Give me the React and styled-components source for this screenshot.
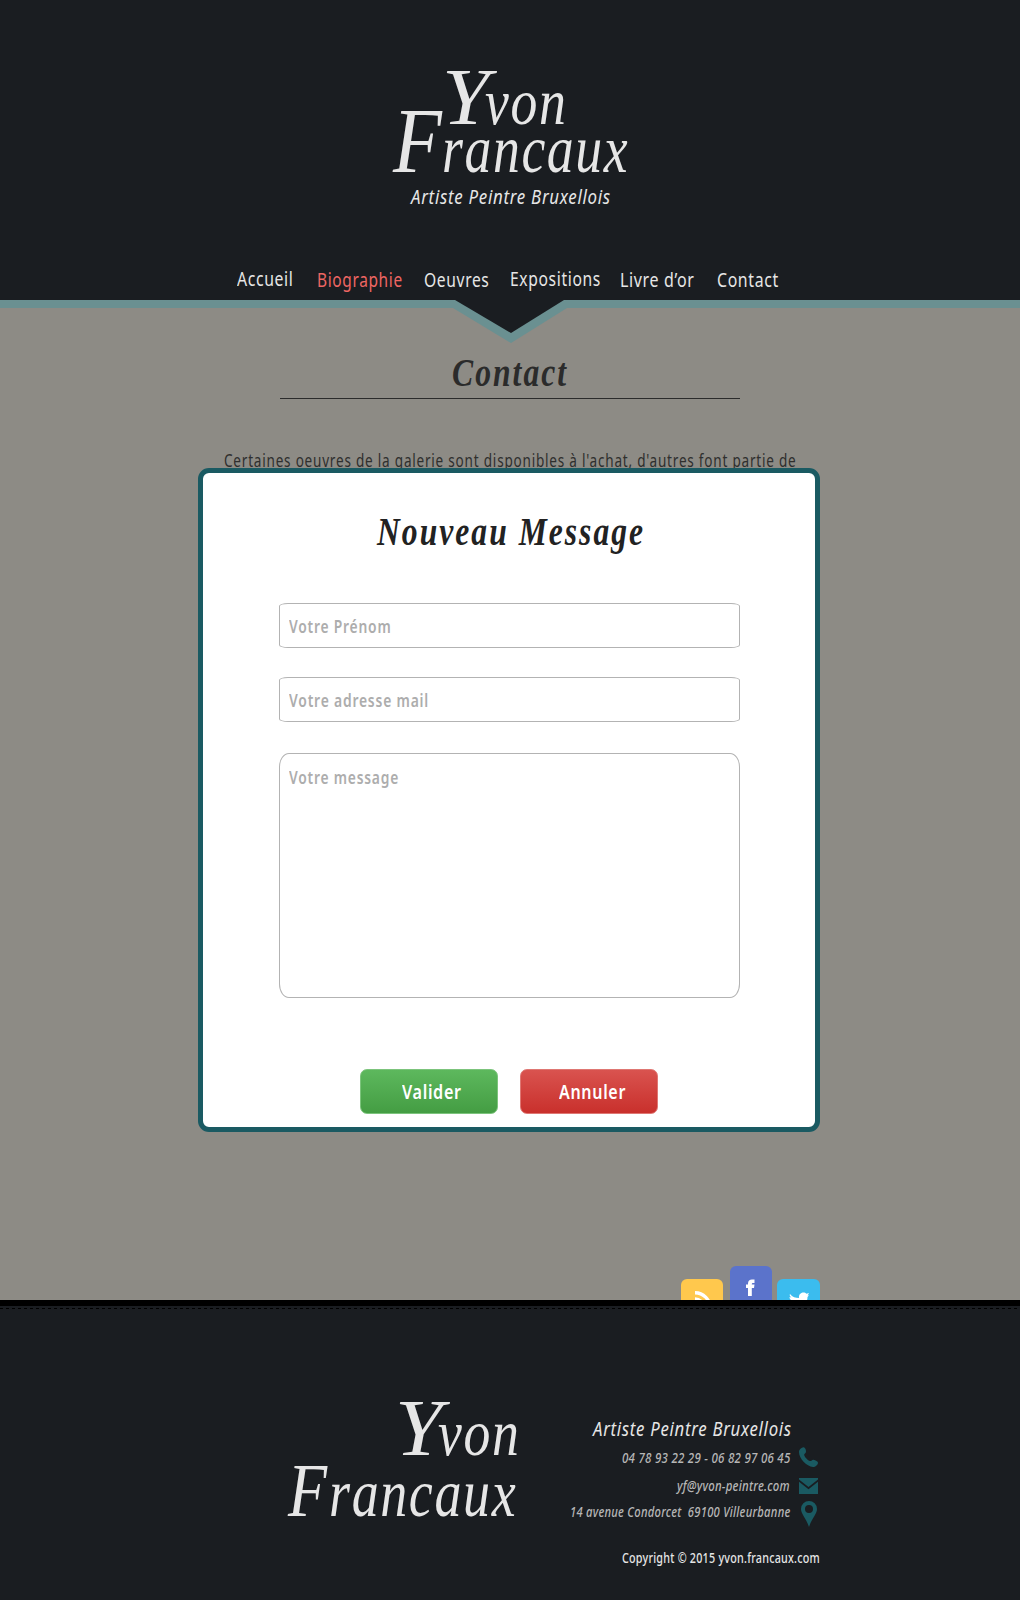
import React, { useLayoutEffect, useRef, useState } from "react";
import styled, { createGlobalStyle, css } from "styled-components";

const ink = "#1a1d21";
const teal = "#1a5a62";
const stone = "#8d8b85";

const Global = createGlobalStyle`
  * { box-sizing: border-box; }
  body { margin: 0; background: ${stone}; }
`;

const sans = css`font-family: "Noto Sans", "Open Sans", sans-serif;`;
const script = css`
  font-family: "Monotype Corsiva", "Liberation Serif", serif;
  font-style: italic;
`;

const FitBox = styled.span`
  display: block;
  flex: none;
  width: ${(p) => p.$w}px;
  margin-left: ${(p) => p.$ml || 0}px;
  margin-top: ${(p) => p.$mt || 0}px;
  line-height: ${(p) => p.$lh || 24}px;
  white-space: pre;
  ${(p) => (p.$script ? script : sans)}
  font-size: ${(p) => p.$size}px;
  font-weight: ${(p) => p.$weight || 400};
  ${(p) => p.$italic && "font-style: italic;"}
  letter-spacing: ${(p) => p.$ls || 0}px;
  color: ${(p) => p.$color || "#e6e6e6"};
`;

const FitInner = styled.span`
  display: inline-block;
  transform-origin: 0 50%;
`;

/* Condenses or widens its text so that it fills the given width. */
function Fit({ children, ...rest }) {
  const ref = useRef(null);
  const [scale, setScale] = useState(1);
  useLayoutEffect(() => {
    setScale(rest.$w / (ref.current.offsetWidth - (rest.$ls || 0)));
  }, [rest.$w, rest.$ls]);
  return (
    <FitBox {...rest}>
      <FitInner ref={ref} style={{ transform: `scaleX(${scale})` }}>{children}</FitInner>
    </FitBox>
  );
}

const Page = styled.div`
  width: 1020px;
  height: 1600px;
  overflow: hidden;
  display: flex;
  flex-direction: column;
  background: ${stone};
`;

const Header = styled.header`
  position: relative;
  z-index: 1;
  flex: none;
  height: 308px;
  padding-top: 57px;
  background: ${ink};
  border-bottom: 8px solid #6a9091;
`;

const LogoRow = styled.div`
  display: flex;
  align-items: baseline;
  height: 80px;
  padding-left: ${(p) => p.$left}px;
  margin-top: ${(p) => p.$mt || 0}px;
`;

const Tagline = styled.div`
  padding: 5px 0 0 411px;
`;

const Nav = styled.nav`
  display: flex;
  padding: 58px 0 0 237px;
`;

const Notch = styled.svg`
  position: absolute;
  left: 450px;
  top: 300px;
  display: block;
`;

const Main = styled.main`
  position: relative;
  flex: none;
  height: 992px;
  overflow: hidden;
  display: flex;
  flex-direction: column;
`;

const Title = styled.h1`
  width: 460px;
  height: 91px;
  margin: 0 0 0 280px;
  padding: 43px 0 0 172px;
  border-bottom: 1px solid #2b2b2b;
`;

const Intro = styled.p`
  margin: 49px 0 0 224px;
`;

const Social = styled.div`
  margin-top: auto;
  padding-left: 681px;
  display: flex;
  align-items: flex-end;
  height: 34px;
`;

const Tile = styled.a`
  display: flex;
  justify-content: center;
  width: ${(p) => p.$w}px;
  height: ${(p) => p.$h}px;
  margin-right: ${(p) => p.$gap}px;
  border-radius: 6px 6px 0 0;
  background: ${(p) => p.$bg};
  overflow: hidden;
`;

const Modal = styled.form`
  position: absolute;
  left: 198px;
  top: 160px;
  width: 622px;
  height: 664px;
  display: flex;
  flex-direction: column;
  padding: 37px 75px 13px 76px;
  background: #fff;
  border: 5px solid ${teal};
  border-radius: 11px;
`;

const Field = styled.label`
  flex: none;
  width: 461px;
  height: ${(p) => p.$h}px;
  margin-top: ${(p) => p.$mt}px;
  padding: ${(p) => p.$pt}px 0 0 9px;
  border: 1px solid #b3b3b3;
  border-radius: ${(p) => p.$r};
`;

const Actions = styled.div`
  display: flex;
  gap: 22px;
  margin: auto 0 0 81px;
`;

const Button = styled.button`
  display: flex;
  align-items: center;
  width: 138px;
  height: 45px;
  padding: 0 0 0 ${(p) => p.$pl}px;
  border: 1px solid ${(p) => p.$edge};
  border-radius: 7px;
  text-align: left;
  background: linear-gradient(${(p) => p.$from}, ${(p) => p.$to});
`;

const Footer = styled.footer`
  flex: none;
  height: 300px;
  display: flex;
  background: ${ink};
  border-top: 6px solid #000;
`;

const Stitch = styled.div`
  height: 1px;
  margin-top: 2px;
  background: repeating-linear-gradient(90deg, #000 0 3px, transparent 3px 6px);
`;

const FooterBody = styled.div`
  width: 1020px;
`;

const Columns = styled.div`
  display: flex;
`;

const FooterLogo = styled.div`
  width: 550px;
  padding-top: 79px;
`;

const Info = styled.div`
  width: 270px;
  display: flex;
  flex-direction: column;
  align-items: flex-end;
  padding-top: 108px;
`;

const InfoRow = styled.div`
  display: flex;
  align-items: center;
  height: ${(p) => p.$h}px;
`;

const Icon = styled.svg`
  display: block;
  flex: none;
  margin-top: ${(p) => p.$mt || 0}px;
  margin-left: ${(p) => p.$ml || 0}px;
  margin-right: ${(p) => p.$mr || 0}px;
`;

const links = [
  { text: "Accueil", w: 56, ml: 0 },
  { text: "Biographie", w: 85, ml: 24, mt: 1, color: "#ee6663" },
  { text: "Oeuvres", w: 65, ml: 22, mt: 1 },
  { text: "Expositions", w: 90, ml: 21 },
  { text: "Livre d’or", w: 74, ml: 20, mt: 1 },
  { text: "Contact", w: 61, ml: 23, mt: 1 },
];

export default function App() {
  return (
    <Page>
      <Global />
      <Header>
        <LogoRow $left={442}>
          <Fit $script $size={80} $lh={80} $w={48}>Y</Fit>
          <Fit $script $size={65} $lh={65} $w={81} $ml={-5} $ls={2}>von</Fit>
        </LogoRow>
        <LogoRow $left={393} $mt={-36}>
          <Fit $script $size={93} $lh={80} $w={49}>F</Fit>
          <Fit $script $size={67} $lh={67} $w={186} $ls={2}>rancaux</Fit>
        </LogoRow>
        <Tagline>
          <Fit $italic $size={19} $w={199} $ls={0.8} $mt={-1}>Artiste Peintre Bruxellois</Fit>
        </Tagline>
        <Nav>
          {links.map((l) => (
            <Fit key={l.text} $size={19.5} $w={l.w} $ml={l.ml} $mt={l.mt} $ls={0.8} $color={l.color}>
              {l.text}
            </Fit>
          ))}
        </Nav>
        <Notch width="122" height="44" viewBox="0 0 122 44">
          <path d="M0 0H122V8H117L61 43L3 8H0Z" fill="#6a9091" />
          <path d="M5 0H114L61 33Z" fill={ink} />
        </Notch>
      </Header>

      <Main>
        <Title>
          <Fit $script $size={39} $lh={44} $w={114} $ls={2.5} $weight={700} $color="#2b2b2b">Contact</Fit>
        </Title>
        <Intro>
          <Fit $size={17.5} $w={572} $ls={1} $color="#2f2f2e">
            Certaines oeuvres de la galerie sont disponibles à l'achat, d'autres font partie de
          </Fit>
        </Intro>
        <Social>
          <Tile $w={42} $h={21} $gap={7} $bg="#ffc84d">
            <Icon width="18" height="22" viewBox="0 0 18 22">
              <g fill="none" stroke="#fff" strokeWidth="3.4">
                <path d="M2 13.7A15 15 0 0 1 17 28.7" />
                <path d="M2 20A9 9 0 0 1 11 29" />
              </g>
            </Icon>
          </Tile>
          <Tile $w={42} $h={34} $gap={5} $bg="#5b73cb">
            <Icon width="10" height="34" viewBox="0 0 10 34">
              <path d="M2 30V22H0V18.500H2V17.500C2 14.800 3.700 13.500 6 13.500H8.500V17H7C6 17 5.800 17.500 5.800 18.500H8.500L8 22H5.800V30Z" fill="#fff" />
            </Icon>
          </Tile>
          <Tile $w={43} $h={21} $gap={0} $bg="#3bbcee">
            <Icon width="20" height="21" viewBox="0 0 20 21">
              <path d="M1 15C3.500 18 6.500 19 10 19C9.500 15.500 12 13.500 14.500 13.500C15.700 13.500 16.700 14 17.500 14.800L20 14L18.700 16.500L20 16.300L18.500 18C18.500 24 14 29 7 29C4.500 29 2 28.300 0 27C2.500 27 4.500 26.500 6 25C4 25 2.500 23.800 2 22H4C1.800 21.500 0.500 19.800 0.500 18L2.500 18.500C0.500 17 0.500 16 1 15Z" fill="#fff" />
            </Icon>
          </Tile>
        </Social>
        <Modal>
          <Fit $script $size={39} $lh={44} $w={266} $ml={98} $ls={2.5} $weight={700} $color="#222">
            Nouveau Message
          </Fit>
          <Field $h={45} $mt={49} $pt={10} $r="9px / 3px">
            <Fit $size={17.5} $w={102} $ls={1} $weight={600} $color="#adadad">Votre Prénom</Fit>
          </Field>
          <Field $h={45} $mt={29} $pt={10} $r="9px / 3px">
            <Fit $size={17.5} $w={139} $ls={1} $weight={600} $color="#adadad">Votre adresse mail</Fit>
          </Field>
          <Field $h={245} $mt={31} $pt={11} $r="10px / 14px">
            <Fit $size={17.5} $w={109} $ls={1} $weight={600} $color="#adadad">Votre message</Fit>
          </Field>
          <Actions>
            <Button type="button" $pl={41} $from="#5db85d" $to="#449d43" $edge="#7cc47c">
              <Fit $size={19.5} $w={59} $ls={0.8} $weight={600} $color="#fff">Valider</Fit>
            </Button>
            <Button type="button" $pl={38} $from="#d9534f" $to="#c9302c" $edge="#df7773">
              <Fit $size={19.5} $w={66} $ls={0.8} $weight={600} $color="#fff">Annuler</Fit>
            </Button>
          </Actions>
        </Modal>
      </Main>

      <Footer>
        <FooterBody>
          <Stitch />
          <Columns>
            <FooterLogo>
              <LogoRow $left={395}>
                <Fit $script $size={80} $lh={80} $w={48}>Y</Fit>
                <Fit $script $size={65} $lh={65} $w={81} $ml={-5} $ls={2}>von</Fit>
              </LogoRow>
              <LogoRow $left={288} $mt={-18}>
                <Fit $script $size={77} $lh={80} $w={39}>F</Fit>
                <Fit $script $size={67} $lh={67} $w={187} $ml={2} $ls={2}>rancaux</Fit>
              </LogoRow>
            </FooterLogo>
            <Info>
              <InfoRow $h={24}>
                <Fit $italic $size={19} $w={198} $ls={0.8}>Artiste Peintre Bruxellois</Fit>
                <Icon width="29" height="20" />
              </InfoRow>
              <InfoRow $h={33}>
                <Fit $italic $size={14} $w={168} $ls={0.3} $weight={500} $color="#b6b6b6">04 78 93 22 29 - 06 82 97 06 45</Fit>
                <Icon $ml={9} $mr={2} $mt={-1} width="19" height="20" viewBox="0 0 19 20">
                  <path d="M4.500 0.200C6 0 7 2.500 7 4.500C7 6.500 5 6.500 5.200 8C5.500 10 9 13.500 11 14C12.500 14.300 12.800 12.500 14.500 12.700C16.500 13 19 14.500 19 15.700C19 17.500 16.500 20 14 20C7.500 19.500 0 11.500 0 5C0 2.500 2.500 0.400 4.500 0.200Z" fill={teal} />
                </Icon>
              </InfoRow>
              <InfoRow $h={24}>
                <Fit $italic $size={14} $w={113} $ls={0.3} $weight={500} $color="#b6b6b6">yf@yvon-peintre.com</Fit>
                <Icon $ml={9} $mr={2} width="19" height="16" viewBox="0 0 19 16">
                  <path d="M0 0H19V1.500L9.500 9L0 1.500ZM0 3.800L9.500 11.300L19 3.800V16H0Z" fill={teal} />
                </Icon>
              </InfoRow>
              <InfoRow $h={28}>
                <Fit $italic $size={14} $w={220} $ls={0.3} $weight={500} $color="#b6b6b6">14 avenue Condorcet  69100 Villeurbanne</Fit>
                <Icon $ml={11} $mr={3} $mt={4} width="16" height="26" viewBox="0 0 16 26">
                  <path fillRule="evenodd" d="M8 0A8 8 0 0 1 16 8C16 13 11 17 8 26C5 17 0 13 0 8A8 8 0 0 1 8 0ZM8 4A4 4 0 1 0 8 12A4 4 0 1 0 8 4Z" fill={teal} />
                </Icon>
              </InfoRow>
              <Fit $size={14} $w={198} $ls={0.3} $mt={20} $weight={500}>Copyright © 2015 yvon.francaux.com</Fit>
            </Info>
          </Columns>
        </FooterBody>
      </Footer>
    </Page>
  );
}
